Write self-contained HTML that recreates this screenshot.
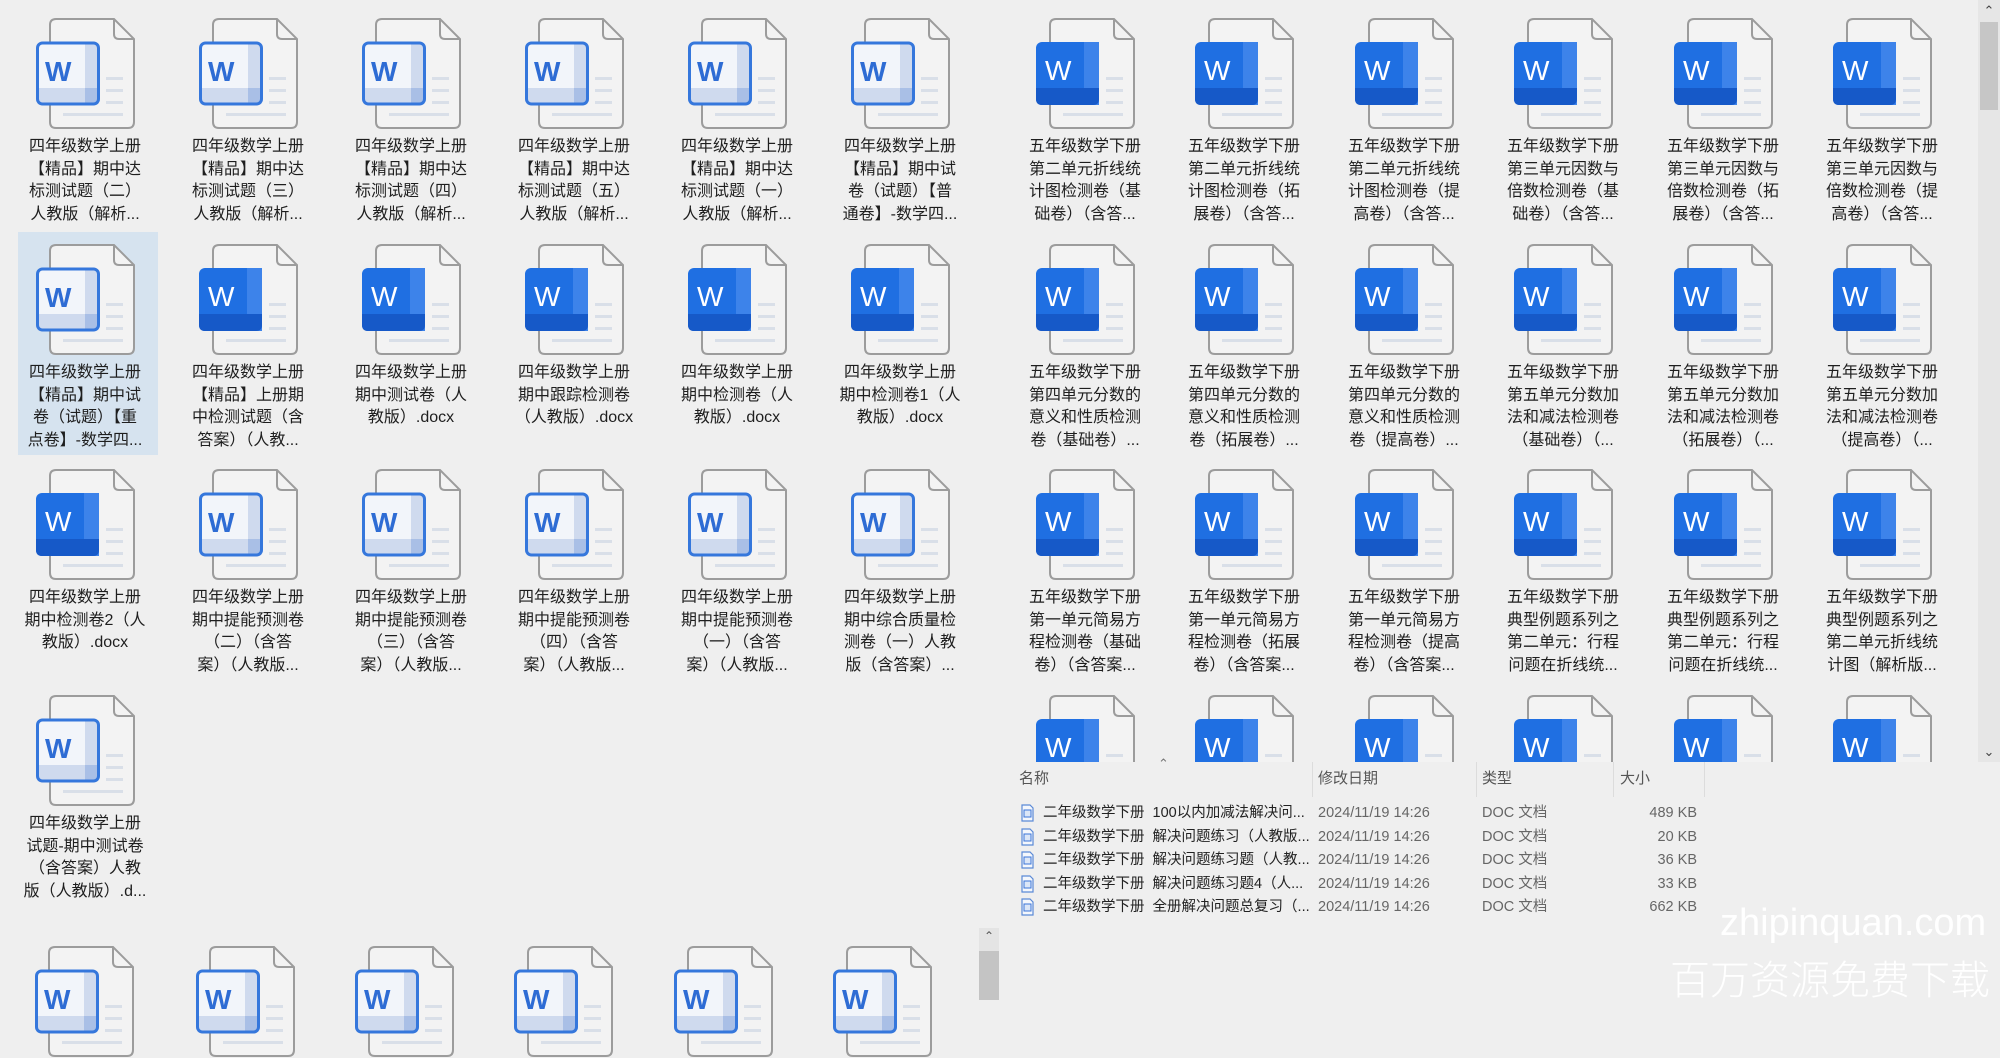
<!DOCTYPE html>
<html><head><meta charset="utf-8">
<style>
*{margin:0;padding:0;box-sizing:border-box}
body{width:2000px;height:1000px;background:#efefef;position:relative;overflow:hidden;font-family:"Liberation Sans","Noto Sans CJK SC",sans-serif;color:#1e1e1e}
.it{position:absolute;width:128px}
.it svg{position:absolute;left:15px;top:0;width:100px;height:112px;overflow:visible}
.it .t{position:absolute;left:-4px;top:118px;width:136px;text-align:center;font-size:16px;line-height:22.5px;white-space:nowrap}
.sel{position:absolute;left:18px;top:232px;width:140px;height:223px;background:#d6e3ef}
.clip{position:absolute;left:1000px;top:0;width:977px;height:762px;overflow:hidden}
.hd{position:absolute;top:767px;font-size:15px;color:#555}
.sep{position:absolute;top:762px;width:1px;height:35px;background:#dcdcdc}
.row{position:absolute;left:1019px;font-size:14.5px;height:20px;line-height:20px;white-space:nowrap}
.row span{position:absolute;color:#666}
.wm{position:absolute;color:rgba(255,255,255,.95);white-space:nowrap}
</style></head><body>
<svg width="0" height="0" style="position:absolute">
<defs>
<g id="pg">
<path d="M20 1 H78 L98 21 V104 Q98 110 92 110 H20 Q14 110 14 104 V7 Q14 1 20 1 Z" fill="#f3f3f3" stroke="#9c9c9c" stroke-width="2"/>
<path d="M78 1 V16 Q78 21 83 21 H98" fill="none" stroke="#9c9c9c" stroke-width="2"/>
<rect x="70" y="59" width="17" height="3" fill="#d9dfe8"/>
<rect x="70" y="71" width="17" height="3" fill="#d9dfe8"/>
<rect x="70" y="83" width="17" height="3" fill="#d9dfe8"/>
<rect x="27" y="95" width="60" height="3" fill="#d9dfe8"/>
</g>
<g id="L">
<use href="#pg"/>
<rect x="1.5" y="25" width="61" height="61" rx="5" fill="#f2f5fa"/>
<rect x="49" y="25" width="13" height="61" fill="#cfdaee"/>
<rect x="1.5" y="70" width="61" height="16" fill="#cfdaee"/>
<rect x="49" y="70" width="13" height="16" fill="#a9bfe6"/>
<rect x="1.5" y="25" width="61" height="61" rx="5" fill="none" stroke="#3577dc" stroke-width="3"/>
<text x="9" y="63" font-family="Liberation Sans" font-weight="bold" font-size="28" fill="#2e6cd4">W</text>
</g>
<g id="D">
<use href="#pg"/>
<rect x="0" y="24" width="63" height="63" rx="6" fill="#1f6fe2"/>
<rect x="48" y="24" width="15" height="63" fill="#3d83ea"/>
<path d="M0 70 H63 V81 Q63 87 57 87 H6 Q0 87 0 81 Z" fill="#1659c8"/>
<text x="9" y="62" font-family="Liberation Sans" font-size="28" fill="#fff">W</text>
</g>
</defs></svg>

<div class="sel"></div>

<div class="it" style="left:21px;top:18px"><svg><use href="#L"/></svg><div class="t">四年级数学上册<br>【精品】期中达<br>标测试题（二）<br>人教版（解析...</div></div>
<div class="it" style="left:184px;top:18px"><svg><use href="#L"/></svg><div class="t">四年级数学上册<br>【精品】期中达<br>标测试题（三）<br>人教版（解析...</div></div>
<div class="it" style="left:347px;top:18px"><svg><use href="#L"/></svg><div class="t">四年级数学上册<br>【精品】期中达<br>标测试题（四）<br>人教版（解析...</div></div>
<div class="it" style="left:510px;top:18px"><svg><use href="#L"/></svg><div class="t">四年级数学上册<br>【精品】期中达<br>标测试题（五）<br>人教版（解析...</div></div>
<div class="it" style="left:673px;top:18px"><svg><use href="#L"/></svg><div class="t">四年级数学上册<br>【精品】期中达<br>标测试题（一）<br>人教版（解析...</div></div>
<div class="it" style="left:836px;top:18px"><svg><use href="#L"/></svg><div class="t">四年级数学上册<br>【精品】期中试<br>卷（试题）【普<br>通卷】-数学四...</div></div>

<div class="it" style="left:21px;top:244px"><svg><use href="#L"/></svg><div class="t">四年级数学上册<br>【精品】期中试<br>卷（试题）【重<br>点卷】-数学四...</div></div>
<div class="it" style="left:184px;top:244px"><svg><use href="#D"/></svg><div class="t">四年级数学上册<br>【精品】上册期<br>中检测试题（含<br>答案）（人教...</div></div>
<div class="it" style="left:347px;top:244px"><svg><use href="#D"/></svg><div class="t">四年级数学上册<br>期中测试卷（人<br>教版）.docx</div></div>
<div class="it" style="left:510px;top:244px"><svg><use href="#D"/></svg><div class="t">四年级数学上册<br>期中跟踪检测卷<br>（人教版）.docx</div></div>
<div class="it" style="left:673px;top:244px"><svg><use href="#D"/></svg><div class="t">四年级数学上册<br>期中检测卷（人<br>教版）.docx</div></div>
<div class="it" style="left:836px;top:244px"><svg><use href="#D"/></svg><div class="t">四年级数学上册<br>期中检测卷1（人<br>教版）.docx</div></div>

<div class="it" style="left:21px;top:469px"><svg><use href="#D"/></svg><div class="t">四年级数学上册<br>期中检测卷2（人<br>教版）.docx</div></div>
<div class="it" style="left:184px;top:469px"><svg><use href="#L"/></svg><div class="t">四年级数学上册<br>期中提能预测卷<br>（二）（含答<br>案）（人教版...</div></div>
<div class="it" style="left:347px;top:469px"><svg><use href="#L"/></svg><div class="t">四年级数学上册<br>期中提能预测卷<br>（三）（含答<br>案）（人教版...</div></div>
<div class="it" style="left:510px;top:469px"><svg><use href="#L"/></svg><div class="t">四年级数学上册<br>期中提能预测卷<br>（四）（含答<br>案）（人教版...</div></div>
<div class="it" style="left:673px;top:469px"><svg><use href="#L"/></svg><div class="t">四年级数学上册<br>期中提能预测卷<br>（一）（含答<br>案）（人教版...</div></div>
<div class="it" style="left:836px;top:469px"><svg><use href="#L"/></svg><div class="t">四年级数学上册<br>期中综合质量检<br>测卷（一）人教<br>版（含答案）...</div></div>

<div class="it" style="left:21px;top:695px"><svg><use href="#L"/></svg><div class="t">四年级数学上册<br>试题-期中测试卷<br>（含答案）人教<br>版（人教版）.d...</div></div>

<div class="it" style="left:20px;top:946px"><svg><use href="#L"/></svg></div>
<div class="it" style="left:181px;top:946px"><svg><use href="#L"/></svg></div>
<div class="it" style="left:340px;top:946px"><svg><use href="#L"/></svg></div>
<div class="it" style="left:499px;top:946px"><svg><use href="#L"/></svg></div>
<div class="it" style="left:659px;top:946px"><svg><use href="#L"/></svg></div>
<div class="it" style="left:818px;top:946px"><svg><use href="#L"/></svg></div>

<div style="position:absolute;left:979px;top:928px;width:20px;height:72px;background:#e4e4e4"></div>
<div style="position:absolute;left:979px;top:951px;width:20px;height:49px;background:#c4c4c4"></div>
<div style="position:absolute;left:979px;top:929px;width:20px;text-align:center;font-size:12px;color:#555">&#8963;</div>

<div class="clip">
<div class="it" style="left:21px;top:18px"><svg><use href="#D"/></svg><div class="t">五年级数学下册<br>第二单元折线统<br>计图检测卷（基<br>础卷）（含答...</div></div>
<div class="it" style="left:180px;top:18px"><svg><use href="#D"/></svg><div class="t">五年级数学下册<br>第二单元折线统<br>计图检测卷（拓<br>展卷）（含答...</div></div>
<div class="it" style="left:340px;top:18px"><svg><use href="#D"/></svg><div class="t">五年级数学下册<br>第二单元折线统<br>计图检测卷（提<br>高卷）（含答...</div></div>
<div class="it" style="left:499px;top:18px"><svg><use href="#D"/></svg><div class="t">五年级数学下册<br>第三单元因数与<br>倍数检测卷（基<br>础卷）（含答...</div></div>
<div class="it" style="left:659px;top:18px"><svg><use href="#D"/></svg><div class="t">五年级数学下册<br>第三单元因数与<br>倍数检测卷（拓<br>展卷）（含答...</div></div>
<div class="it" style="left:818px;top:18px"><svg><use href="#D"/></svg><div class="t">五年级数学下册<br>第三单元因数与<br>倍数检测卷（提<br>高卷）（含答...</div></div>

<div class="it" style="left:21px;top:244px"><svg><use href="#D"/></svg><div class="t">五年级数学下册<br>第四单元分数的<br>意义和性质检测<br>卷（基础卷）...</div></div>
<div class="it" style="left:180px;top:244px"><svg><use href="#D"/></svg><div class="t">五年级数学下册<br>第四单元分数的<br>意义和性质检测<br>卷（拓展卷）...</div></div>
<div class="it" style="left:340px;top:244px"><svg><use href="#D"/></svg><div class="t">五年级数学下册<br>第四单元分数的<br>意义和性质检测<br>卷（提高卷）...</div></div>
<div class="it" style="left:499px;top:244px"><svg><use href="#D"/></svg><div class="t">五年级数学下册<br>第五单元分数加<br>法和减法检测卷<br>（基础卷）（...</div></div>
<div class="it" style="left:659px;top:244px"><svg><use href="#D"/></svg><div class="t">五年级数学下册<br>第五单元分数加<br>法和减法检测卷<br>（拓展卷）（...</div></div>
<div class="it" style="left:818px;top:244px"><svg><use href="#D"/></svg><div class="t">五年级数学下册<br>第五单元分数加<br>法和减法检测卷<br>（提高卷）（...</div></div>

<div class="it" style="left:21px;top:469px"><svg><use href="#D"/></svg><div class="t">五年级数学下册<br>第一单元简易方<br>程检测卷（基础<br>卷）（含答案...</div></div>
<div class="it" style="left:180px;top:469px"><svg><use href="#D"/></svg><div class="t">五年级数学下册<br>第一单元简易方<br>程检测卷（拓展<br>卷）（含答案...</div></div>
<div class="it" style="left:340px;top:469px"><svg><use href="#D"/></svg><div class="t">五年级数学下册<br>第一单元简易方<br>程检测卷（提高<br>卷）（含答案...</div></div>
<div class="it" style="left:499px;top:469px"><svg><use href="#D"/></svg><div class="t">五年级数学下册<br>典型例题系列之<br>第二单元：行程<br>问题在折线统...</div></div>
<div class="it" style="left:659px;top:469px"><svg><use href="#D"/></svg><div class="t">五年级数学下册<br>典型例题系列之<br>第二单元：行程<br>问题在折线统...</div></div>
<div class="it" style="left:818px;top:469px"><svg><use href="#D"/></svg><div class="t">五年级数学下册<br>典型例题系列之<br>第二单元折线统<br>计图（解析版...</div></div>

<div class="it" style="left:21px;top:695px"><svg><use href="#D"/></svg></div>
<div class="it" style="left:180px;top:695px"><svg><use href="#D"/></svg></div>
<div class="it" style="left:340px;top:695px"><svg><use href="#D"/></svg></div>
<div class="it" style="left:499px;top:695px"><svg><use href="#D"/></svg></div>
<div class="it" style="left:659px;top:695px"><svg><use href="#D"/></svg></div>
<div class="it" style="left:818px;top:695px"><svg><use href="#D"/></svg></div>
</div>

<div style="position:absolute;left:1978px;top:0;width:22px;height:762px;background:#e6e6e6"></div>
<div style="position:absolute;left:1980px;top:22px;width:18px;height:88px;background:#c6c6c6"></div>
<div style="position:absolute;left:1978px;top:3px;width:22px;text-align:center;font-size:13px;color:#444">&#8963;</div>
<div style="position:absolute;left:1978px;top:744px;width:22px;text-align:center;font-size:13px;color:#444">&#8964;</div>

<div style="position:absolute;left:1158px;top:756px;font-size:13px;color:#777">&#8963;</div>
<div class="hd" style="left:1019px">名称</div>
<div class="hd" style="left:1318px">修改日期</div>
<div class="hd" style="left:1482px">类型</div>
<div class="hd" style="left:1620px">大小</div>
<div class="sep" style="left:1312px"></div>
<div class="sep" style="left:1476px"></div>
<div class="sep" style="left:1613px"></div>
<div class="sep" style="left:1704px"></div>

<svg style="position:absolute;left:0;top:0;width:0;height:0"><defs><g id="si"><path d="M2 1 H10 L13 4 V17 H2 Z" fill="#f4f7fc" stroke="#5b8ad6" stroke-width="1.2"/><rect x="4" y="6" width="7" height="7" fill="#dbe6f7" stroke="#3b76d8" stroke-width="1"/></g></defs></svg>

<div class="row" style="top:803px"><svg style="position:absolute;left:1px;top:1px;width:16px;height:19px"><use href="#si"/></svg><span style="left:24px;color:#222">二年级数学下册&nbsp;&nbsp;100以内加减法解决问...</span><span style="left:299px">2024/11/19 14:26</span><span style="left:463px">DOC 文档</span><span style="left:594px;width:84px;text-align:right">489 KB</span></div>
<div class="row" style="top:827px"><svg style="position:absolute;left:1px;top:1px;width:16px;height:19px"><use href="#si"/></svg><span style="left:24px;color:#222">二年级数学下册&nbsp;&nbsp;解决问题练习（人教版...</span><span style="left:299px">2024/11/19 14:26</span><span style="left:463px">DOC 文档</span><span style="left:594px;width:84px;text-align:right">20 KB</span></div>
<div class="row" style="top:850px"><svg style="position:absolute;left:1px;top:1px;width:16px;height:19px"><use href="#si"/></svg><span style="left:24px;color:#222">二年级数学下册&nbsp;&nbsp;解决问题练习题（人教...</span><span style="left:299px">2024/11/19 14:26</span><span style="left:463px">DOC 文档</span><span style="left:594px;width:84px;text-align:right">36 KB</span></div>
<div class="row" style="top:874px"><svg style="position:absolute;left:1px;top:1px;width:16px;height:19px"><use href="#si"/></svg><span style="left:24px;color:#222">二年级数学下册&nbsp;&nbsp;解决问题练习题4（人...</span><span style="left:299px">2024/11/19 14:26</span><span style="left:463px">DOC 文档</span><span style="left:594px;width:84px;text-align:right">33 KB</span></div>
<div class="row" style="top:897px"><svg style="position:absolute;left:1px;top:1px;width:16px;height:19px"><use href="#si"/></svg><span style="left:24px;color:#222">二年级数学下册&nbsp;&nbsp;全册解决问题总复习（...</span><span style="left:299px">2024/11/19 14:26</span><span style="left:463px">DOC 文档</span><span style="left:594px;width:84px;text-align:right">662 KB</span></div>

<div class="wm" style="left:1720px;top:902px;font-size:38px;font-family:'Liberation Sans',sans-serif;width:272px;overflow:hidden">zhipinquan.com</div>
<div class="wm" style="left:1670px;top:948px;font-size:40px;font-family:'Noto Sans CJK SC',sans-serif;font-weight:300">百万资源免费下载</div>
</body></html>
